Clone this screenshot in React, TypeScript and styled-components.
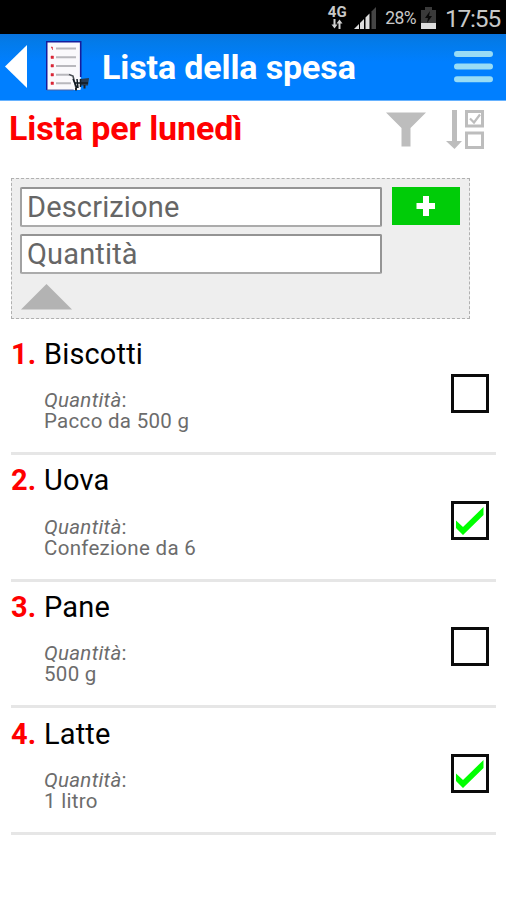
import React, { useState } from "react";
import styled, { createGlobalStyle } from "styled-components";

const GlobalStyle = createGlobalStyle`
  * { box-sizing: border-box; }
  html, body { margin: 0; background: #fff; }
  body { font-family: Roboto, "Liberation Sans", sans-serif; }
  button { border: 0; padding: 0; background: none; cursor: pointer; }
  svg { display: block; flex: none; }
`;

const Screen = styled.main`
  width: 506px;
  height: 900px;
  overflow: hidden;
  background: #fff;
`;

const StatusBar = styled.div`
  height: 34px;
  display: flex;
  align-items: center;
  justify-content: flex-end;
  padding: 2px 6px 0 0;
  background: #000;
  color: #c8c8c8;
`;

const Network = styled.div`
  width: 20px;
  margin: 0 7px 2px 0;
  display: flex;
  flex-direction: column;
  align-items: center;
  font-size: 15px;
  font-weight: 700;
  line-height: 14px;
`;

const Percent = styled.span`
  margin: 0 5px 0 8px;
  font-size: 17.5px;
  line-height: 20px;
  letter-spacing: -0.6px;
`;

const Clock = styled.span`
  margin: 2px 0 0 9px;
  font-size: 24.5px;
  line-height: 30px;
  letter-spacing: -1.2px;
`;

const Header = styled.header`
  height: 67px;
  display: flex;
  align-items: center;
  padding: 0 13px 0 5px;
  background: linear-gradient(#0873df 0, #037be9 8px, #007fff 28px);
  border-bottom: 1px solid #66b2ff;
`;

const BackButton = styled.button`
  margin-right: 18px;
`;

const Title = styled.h1`
  flex: 1;
  margin: 0 0 0 12px;
  color: #fff;
  font-size: 34px;
  font-weight: 700;
  line-height: 40px;
  letter-spacing: -0.12px;
  white-space: nowrap;
`;

const SubHeader = styled.div`
  height: 77px;
  display: flex;
  padding: 7px 20px 0 9px;
`;

const ListTitle = styled.h2`
  flex: 1;
  margin: 0;
  color: #f00;
  font-size: 34px;
  font-weight: 700;
  line-height: 40px;
  letter-spacing: -0.12px;
  white-space: nowrap;
`;

const Tools = styled.div`
  display: flex;
  align-items: flex-start;
  gap: 20px;
`;

const Form = styled.form`
  width: 459px;
  height: 141px;
  margin-left: 11px;
  padding: 8px 8px 0;
  display: grid;
  grid-template-columns: 362px 68px;
  grid-template-rows: 40px 40px 26px;
  column-gap: 10px;
  row-gap: 7px;
  background: #eee;
  border: 1px dashed #b0b0b0;
`;

const Field = styled.input`
  grid-column: 1;
  width: 362px;
  height: 40px;
  padding: 0 5px;
  border: 2px solid #949494;
  border-left: 2px solid #a2a2a2;
  border-bottom-color: #ababab;
  border-radius: 2px;
  background: #fff;
  font-family: inherit;
  font-size: 29px;
  letter-spacing: 0.15px;
  outline: 0;
  &::placeholder { color: #666; opacity: 1; }
`;

const AddButton = styled.button`
  grid-column: 2;
  grid-row: 1;
  height: 38px;
  && { background: #00cc08; }
  display: flex;
  align-items: center;
  justify-content: center;
`;

const Collapse = styled.button`
  grid-column: 1;
  grid-row: 3;
  justify-self: start;
  margin: 3px 0 0 0.5px;
`;

const List = styled.ol`
  margin: 9.4px 10px 0 11px;
  padding: 0;
  list-style: none;
`;

const Item = styled.li`
  height: 126.67px;
  display: flex;
  border-bottom: 3px solid #e6e6e6;
`;

const Index = styled.span`
  width: 33px;
  padding-top: 8.2px;
  color: #f00;
  font-size: 29px;
  font-weight: 700;
  line-height: 34px;
`;

const Details = styled.div`
  flex: 1;
  padding-top: 8.2px;
`;

const Name = styled.div`
  color: #000;
  font-size: 29px;
  line-height: 34px;
  letter-spacing: 0.15px;
`;

const Quantity = styled.div`
  margin-top: 19.5px;
  color: #6c6c6c;
  font-size: 20.5px;
  letter-spacing: 0.3px;
  line-height: 21px;
`;

const Checkbox = styled.button`
  align-self: flex-start;
  margin: 45.6px 7px 0 0;
`;

const ListIcon = () => (
  <svg width="44" height="52" viewBox="0 0 44 52">
    <rect x="0.7" y="0.7" width="34" height="48.3" rx="1" fill="#faf9fc" />
    <path d="M0.7 49V0.7H34.7V36" fill="none" stroke="#161c9c" strokeWidth="1.6" />
    <path d="M0.7 49h27" stroke="#4c62a5" strokeWidth="1" />
    <path d="M10 7.5h20M10 16.2h20M10 25h20M10 33.7h13M10 42.3h15" stroke="#b9b8bd" strokeWidth="2" />
    <path d="M5 6h1.5v3M5 15h2.5v2.5H5zM5 23.5h2.5v2.5H5zM5 32.5h2.5v2.5H5zM5 41h2.5v2.5H5z" fill="#d82637" stroke="#d82637" strokeWidth=".5" />
    <path d="M23 33.5l4 1.5 3 12" fill="none" stroke="#4a4e54" strokeWidth="1.6" />
    <path d="M34 38l9-1-1 7.5h-8z" fill="#263c55" />
    <path d="M27 38l4 9M31 38l1 9M34.500 38v8M29 42h13" stroke="#111a22" strokeWidth="1.5" />
    <path d="M30 47v2.500M38.500 44v3.500" stroke="#222" strokeWidth="2" />
  </svg>
);

const items = [
  { name: "Biscotti", quantity: "Pacco da 500 g", done: false },
  { name: "Uova", quantity: "Confezione da 6", done: true },
  { name: "Pane", quantity: "500 g", done: false },
  { name: "Latte", quantity: "1 litro", done: true },
];

export default function App() {
  const [list, setList] = useState(items);
  const toggle = (index: number) =>
    setList(list.map((item, i) => (i === index ? { ...item, done: !item.done } : item)));

  return (
    <Screen>
      <GlobalStyle />
      <StatusBar>
        <Network>
          4G
          <svg width="14" height="10" viewBox="0 0 14 10">
            <path d="M4.500 0v7M9.500 10V3" stroke="#d0d0d0" strokeWidth="2" />
            <path d="M1.500 5.500h6L4.500 9.500zM6.500 4.500h6L9.500 0.500z" fill="#d0d0d0" />
          </svg>
        </Network>
        <svg width="23" height="23" viewBox="0 0 23 23">
          <path d="M0 22l5-5v5z" fill="#ddd" />
          <path d="M6 22v-6l4-4v10zM11.500 22V10.500l4-4V22z" fill="#ddd" />
          <path d="M17.500 22V4.500l4.500-4.500V22z" fill="#444" />
        </svg>
        <Percent>28%</Percent>
        <svg width="15" height="23" viewBox="0 0 15 23">
          <path d="M4 0h7v3h4v13H0V3h4z" fill="#3a3a3a" />
          <path d="M9 4l-5 7h3l-1 5 5-7H8z" fill="#090909" />
          <path d="M0 16h15v6H0z" fill="#ddd" />
        </svg>
        <Clock>17:55</Clock>
      </StatusBar>
      <Header>
        <BackButton aria-label="Indietro">
          <svg width="23" height="44" viewBox="0 0 23 44">
            <path d="M22 0v43L0 21.5z" fill="#fff" />
          </svg>
        </BackButton>
        <ListIcon />
        <Title>Lista della spesa</Title>
        <svg width="39" height="33" viewBox="0 0 39 33">
          <path d="M3 3h33M3 15.5h33M3 28.2h33" stroke="#98dcf5" strokeWidth="6" strokeLinecap="round" />
        </svg>
      </Header>
      <SubHeader>
        <ListTitle>Lista per lunedì</ListTitle>
        <Tools>
          <svg width="40" height="40" viewBox="0 0 40 40">
            <path d="M0 4.5h40L24.500 20v18.500h-9V20z" fill="#bdbdbd" />
          </svg>
          <svg width="40" height="42" viewBox="0 0 40 42">
            <path d="M6 2h5v31h5l-7.500 8L0 33h6z" fill="#bdbdbd" />
            <path d="M20.500 3.500h16v14.500h-16zM20.500 25h16v14.500h-16z" fill="none" stroke="#bdbdbd" strokeWidth="3" />
            <path d="M24 10.500l4 4 6-8" fill="none" stroke="#bdbdbd" strokeWidth="2.2" />
          </svg>
        </Tools>
      </SubHeader>
      <Form onSubmit={(e) => e.preventDefault()}>
        <Field placeholder="Descrizione" />
        <AddButton aria-label="Aggiungi">
          <svg width="20" height="20" viewBox="0 0 20 20">
            <path d="M7 0h6v7h6v6h-6v7H7v-7H0.500V7h6.500z" fill="#fff" />
          </svg>
        </AddButton>
        <Field placeholder="Quantità" />
        <Collapse type="button" aria-label="Comprimi">
          <svg width="51" height="26" viewBox="0 0 51 26">
            <path d="M25.500 0L51 25.500H0z" fill="#b3b3b3" />
          </svg>
        </Collapse>
      </Form>
      <List>
        {list.map((item, i) => (
          <Item key={item.name}>
            <Index>{i + 1}.</Index>
            <Details>
              <Name>{item.name}</Name>
              <Quantity>
                <div><em>Quantità</em>:</div>
                <div>{item.quantity}</div>
              </Quantity>
            </Details>
            <Checkbox role="checkbox" aria-checked={item.done} onClick={() => toggle(i)}>
              <svg width="38" height="39" viewBox="0 0 38 39">
                <rect x="1.5" y="1.5" width="35" height="36" fill="#fff" stroke="#0b0b0b" strokeWidth="3" />
                {item.done && (
                  <path d="M5 19.500l7 6.500L32.500 6v8L12 34 5 27z" fill="#0f0" />
                )}
              </svg>
            </Checkbox>
          </Item>
        ))}
      </List>
    </Screen>
  );
}
